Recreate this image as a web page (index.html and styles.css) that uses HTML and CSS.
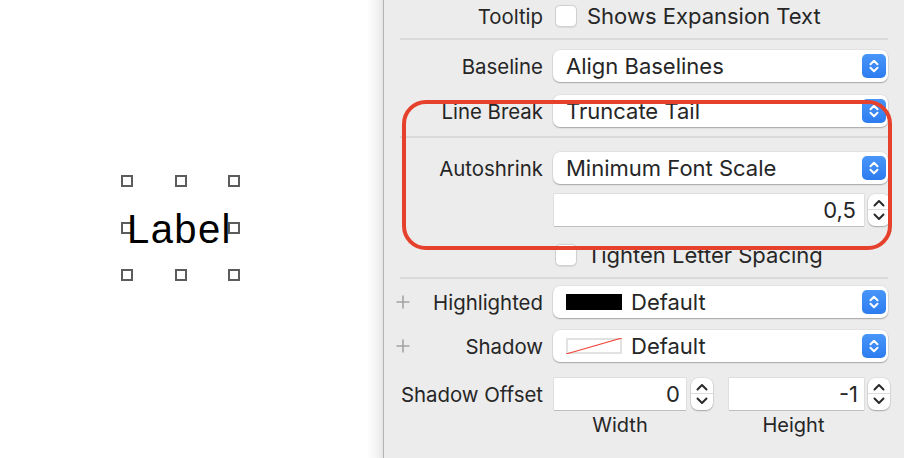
FILE: index.html
```html
<!DOCTYPE html>
<html>
<head>
<meta charset="utf-8">
<link rel="stylesheet" href="styles.css">
</head>
<body>
<div class="app">
  <div class="canvas">
    <div class="selection">
      <div class="handles">
        <span class="h"></span><span class="h"></span><span class="h"></span>
        <span class="h"></span><span class="hgap"></span><span class="h"></span>
        <span class="h"></span><span class="h"></span><span class="h"></span>
      </div>
      <div class="label-text">Label</div>
    </div>
  </div>
  <div class="inspector">
    <div class="row r-tooltip">
      <div class="lbl">Tooltip</div>
      <div class="ctl"><span class="check"></span><span class="ctext">Shows Expansion Text</span></div>
    </div>
    <div class="sep s1"></div>
    <div class="row r-baseline">
      <div class="lbl">Baseline</div>
      <div class="ctl"><div class="popup"><span class="ptext">Align Baselines</span><span class="arrows"><svg width="24" height="24" viewBox="0 0 24 24"><path d="M8.5 10.2 L12 6.8 L15.5 10.2 M8.5 13.8 L12 17.2 L15.5 13.8" fill="none" stroke="#fff" stroke-width="2" stroke-linecap="round" stroke-linejoin="round"/></svg></span></div></div>
    </div>
    <div class="row r-linebreak">
      <div class="lbl">Line Break</div>
      <div class="ctl"><div class="popup"><span class="ptext">Truncate Tail</span><span class="arrows"><svg width="24" height="24" viewBox="0 0 24 24"><path d="M8.5 10.2 L12 6.8 L15.5 10.2 M8.5 13.8 L12 17.2 L15.5 13.8" fill="none" stroke="#fff" stroke-width="2" stroke-linecap="round" stroke-linejoin="round"/></svg></span></div></div>
    </div>
    <div class="sep s2"></div>
    <div class="row r-autoshrink">
      <div class="lbl">Autoshrink</div>
      <div class="ctl"><div class="popup"><span class="ptext">Minimum Font Scale</span><span class="arrows"><svg width="24" height="24" viewBox="0 0 24 24"><path d="M8.5 10.2 L12 6.8 L15.5 10.2 M8.5 13.8 L12 17.2 L15.5 13.8" fill="none" stroke="#fff" stroke-width="2" stroke-linecap="round" stroke-linejoin="round"/></svg></span></div></div>
    </div>
    <div class="row r-scale">
      <div class="lbl"></div>
      <div class="ctl">
        <div class="field f-scale">0,5</div>
        <div class="stepper"><svg width="22" height="32" viewBox="0 0 22 32"><path d="M6.5 11.5 L11 7 L15.5 11.5 M6.5 20.5 L11 25 L15.5 20.5" fill="none" stroke="#2a2a2a" stroke-width="2" stroke-linecap="round" stroke-linejoin="round"/></svg></div>
      </div>
    </div>
    <div class="row r-tighten">
      <div class="lbl"></div>
      <div class="ctl"><span class="check"></span><span class="ctext">Tighten Letter Spacing</span></div>
    </div>
    <div class="sep s3"></div>
    <div class="row r-highlighted">
      <div class="lbl plus-lbl"><span class="plus"><svg width="14" height="14" viewBox="0 0 14 14"><path d="M7 0.5 V13.5 M0.5 7 H13.5" stroke="#a3a3a3" stroke-width="1.6"/></svg></span><span>Highlighted</span></div>
      <div class="ctl"><div class="popup"><span class="swatch black"></span><span class="ptext2">Default</span><span class="arrows"><svg width="24" height="24" viewBox="0 0 24 24"><path d="M8.5 10.2 L12 6.8 L15.5 10.2 M8.5 13.8 L12 17.2 L15.5 13.8" fill="none" stroke="#fff" stroke-width="2" stroke-linecap="round" stroke-linejoin="round"/></svg></span></div></div>
    </div>
    <div class="row r-shadow">
      <div class="lbl plus-lbl"><span class="plus"><svg width="14" height="14" viewBox="0 0 14 14"><path d="M7 0.5 V13.5 M0.5 7 H13.5" stroke="#a3a3a3" stroke-width="1.6"/></svg></span><span>Shadow</span></div>
      <div class="ctl"><div class="popup"><span class="swatch none"><svg width="56" height="16" viewBox="0 0 56 16"><line x1="0" y1="16" x2="56" y2="0" stroke="#f0453a" stroke-width="1.2"/></svg></span><span class="ptext2">Default</span><span class="arrows"><svg width="24" height="24" viewBox="0 0 24 24"><path d="M8.5 10.2 L12 6.8 L15.5 10.2 M8.5 13.8 L12 17.2 L15.5 13.8" fill="none" stroke="#fff" stroke-width="2" stroke-linecap="round" stroke-linejoin="round"/></svg></span></div></div>
    </div>
    <div class="row r-offset">
      <div class="lbl">Shadow Offset</div>
      <div class="ctl">
        <div class="field f-width">0</div>
        <div class="stepper st-a"><svg width="22" height="32" viewBox="0 0 22 32"><path d="M6.5 11.5 L11 7 L15.5 11.5 M6.5 20.5 L11 25 L15.5 20.5" fill="none" stroke="#2a2a2a" stroke-width="2" stroke-linecap="round" stroke-linejoin="round"/></svg></div>
        <div class="field f-height">-1</div>
        <div class="stepper st-b"><svg width="22" height="32" viewBox="0 0 22 32"><path d="M6.5 11.5 L11 7 L15.5 11.5 M6.5 20.5 L11 25 L15.5 20.5" fill="none" stroke="#2a2a2a" stroke-width="2" stroke-linecap="round" stroke-linejoin="round"/></svg></div>
      </div>
    </div>
    <div class="row r-captions">
      <div class="lbl"></div>
      <div class="ctl">
        <div class="cap c-width">Width</div>
        <div class="cap c-height">Height</div>
      </div>
    </div>
    <div class="annot"></div>
  </div>
</div>
</body>
</html>
```

FILE: styles.css
```css
html, body {
  margin: 0;
  padding: 0;
  width: 904px;
  height: 458px;
  overflow: hidden;
  background: #ffffff;
}

.app {
  display: flex;
  width: 904px;
  height: 458px;
}

.canvas {
  position: relative;
  width: 383px;
  flex: 0 0 383px;
  background: linear-gradient(to right, #ffffff 0, #ffffff 367px, #f3f3f3 377px, #e6e6e6 383px);
}

.selection {
  position: absolute;
  left: 121px;
  top: 175px;
  width: 119px;
  height: 106px;
}

.handles {
  display: grid;
  grid-template-columns: 12px 12px 12px;
  grid-template-rows: 12px 12px 12px;
  justify-content: space-between;
  align-content: space-between;
  width: 119px;
  height: 106px;
}

.h {
  box-sizing: border-box;
  width: 12px;
  height: 12px;
  border: 2px solid #5c5c5c;
  background: #ffffff;
}

.label-text {
  position: absolute;
  left: 6px;
  top: 34px;
  font-family: "Liberation Sans", Arial, sans-serif;
  font-size: 40px;
  line-height: 40px;
  letter-spacing: 1.4px;
  color: #000000;
  white-space: nowrap;
}

.inspector {
  position: relative;
  flex: 1;
  background: #ececec;
  border-left: 1px solid #b3b3b3;
  display: flex;
  flex-direction: column;
  font-family: "Inter", "Noto Sans", sans-serif;
  font-size: 22px;
  color: #262626;
}

.row {
  display: flex;
  align-items: center;
  height: 32px;
  flex: 0 0 auto;
}

.lbl {
  width: 159px;
  flex: 0 0 159px;
  text-align: right;
  white-space: nowrap;
  font-size: 20.4px;
}

.ctl {
  display: flex;
  align-items: center;
  margin-left: 10px;
}

.plus-lbl {
  display: flex;
  align-items: center;
  justify-content: space-between;
  box-sizing: border-box;
  padding-left: 12px;
}

.plus {
  display: flex;
}

.check {
  box-sizing: border-box;
  width: 22px;
  height: 22px;
  margin-left: 2px;
  background: #ffffff;
  border: 1px solid #d0d0d0;
  border-radius: 5px;
  box-shadow: 0 0.5px 1px rgba(0,0,0,0.08);
}

.ctext {
  margin-left: 10px;
  white-space: nowrap;
}

.sep {
  height: 2px;
  background: #dadada;
  margin-left: 16px;
  width: 488px;
  flex: 0 0 auto;
}

.s1 { margin-top: 6px; }
.r-baseline { margin-top: 10px; }
.r-linebreak { margin-top: 13px; }
.s2 { margin-top: 9px; }
.r-autoshrink { margin-top: 14px; }
.r-scale { margin-top: 10px; }
.r-tighten { margin-top: 18px; height: 22px; }
.s3 { margin-top: 11px; }
.r-highlighted { margin-top: 7px; }
.r-shadow { margin-top: 12px; }
.r-offset { margin-top: 16px; }
.r-captions { margin-top: 3px; height: 24px; }

.popup {
  box-sizing: border-box;
  width: 335px;
  height: 32px;
  background: #ffffff;
  border-radius: 7px;
  box-shadow: 0 0 0 0.5px rgba(0,0,0,0.08), 0 1px 1.5px rgba(0,0,0,0.28);
  display: flex;
  align-items: center;
  padding-left: 13px;
  padding-right: 2px;
}

.ptext, .ptext2 {
  flex: 1;
  white-space: nowrap;
}

.ptext2 {
  margin-left: 9px;
}

.arrows {
  display: flex;
  width: 24px;
  height: 24px;
  border-radius: 5px;
  background: linear-gradient(to bottom, #4896f9, #2d7cf0);
}

.swatch {
  box-sizing: border-box;
  width: 56px;
  height: 16px;
  display: flex;
}

.swatch.black {
  background: #000000;
}

.swatch.none {
  background: #ffffff;
  box-shadow: inset 0 0 0 2px #e2e2e2;
}

.field {
  box-sizing: border-box;
  height: 32px;
  background: #ffffff;
  box-shadow: 0 0 0 0.5px rgba(0,0,0,0.12), 0 1px 0 rgba(0,0,0,0.14);
  text-align: right;
  line-height: 32px;
  padding-right: 7px;
  margin-left: 1px;
}

.f-scale { width: 310px; padding-right: 8px; }
.f-width { width: 132px; padding-right: 6px; }
.f-height { width: 135px; margin-left: 16px; padding-right: 6px; }

.stepper {
  width: 22px;
  height: 32px;
  margin-left: 4px;
  background: #ffffff;
  border-radius: 7px;
  box-shadow: 0 0 0 0.5px rgba(0,0,0,0.1), 0 1px 1.5px rgba(0,0,0,0.25);
  background-image: linear-gradient(to bottom, transparent 15.5px, #dcdcdc 15.5px, #dcdcdc 16.5px, transparent 16.5px);
  display: flex;
}

.st-a { margin-left: 5px; }

.cap {
  text-align: center;
  white-space: nowrap;
  font-size: 20px;
}

.c-width { width: 134px; }
.c-height { width: 135px; margin-left: 39px; }

.annot {
  position: absolute;
  left: 18px;
  top: 100px;
  width: 490px;
  height: 150px;
  box-sizing: border-box;
  border: 4.5px solid #e5412d;
  border-radius: 24px;
  pointer-events: none;
}
```
